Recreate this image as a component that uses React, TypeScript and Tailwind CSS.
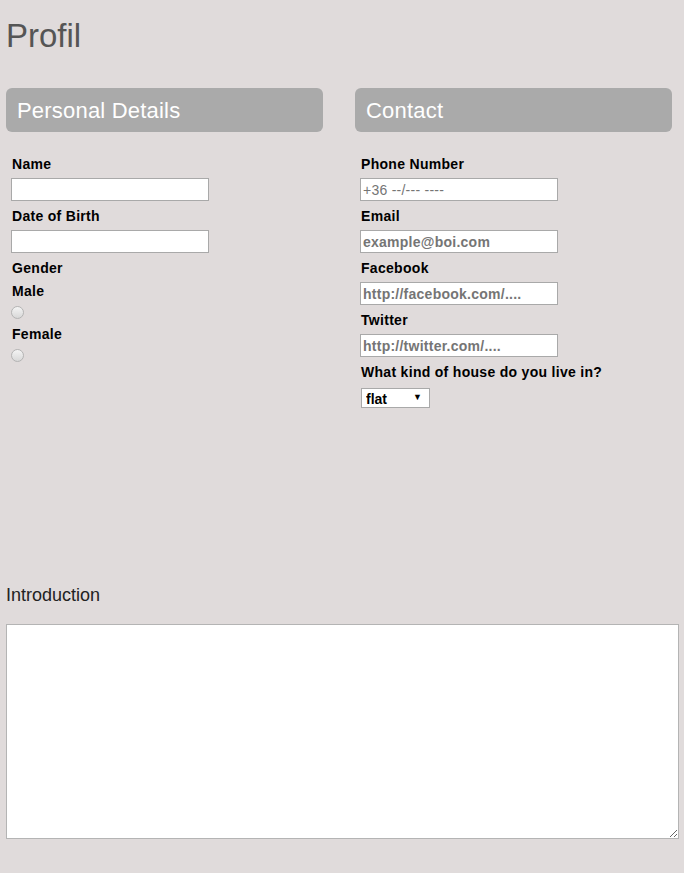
import React from "react";

const Label = ({ children, className = "" }: { children: React.ReactNode; className?: string }) => (
  <label className={"block ml-[1px] text-[14px] leading-[16px] tracking-[0.3px] font-bold text-black " + className}>
    {children}
  </label>
);

const TextInput = ({ placeholder, bold = true }: { placeholder?: string; bold?: boolean }) => (
  <input
    type="text"
    placeholder={placeholder}
    className={
      "block w-[198px] h-[23px] mb-[7px] bg-white border border-[#a9a9a9] px-[2px] text-[14px] tracking-[0.25px] text-black outline-none placeholder:text-[#757575] " +
      (bold ? "font-bold" : "font-normal")
    }
  />
);

const Radio = ({ name }: { name: string }) => (
  <input
    type="radio"
    name={name}
    className="block appearance-none w-[13px] h-[13px] rounded-full border border-[#b4b4b4] bg-gradient-to-b from-[#f4f4f4] to-[#d8d8d8] mb-[7px]"
  />
);

const Header = ({ title }: { title: string }) => (
  <div className="flex items-center h-[44px] rounded-[6px] bg-[#aaaaaa] px-[11px] text-[22px] tracking-[0.2px] text-white mb-[24px]">
    {title}
  </div>
);

export default function App() {
  return (
    <div
      className="min-h-screen bg-[#e0dbdb] px-[6px] pb-[30px]"
      style={{ fontFamily: '"Liberation Sans", Arial, sans-serif' }}
    >
      <h1 className="pt-[16px] text-[33px] leading-[40px] text-[#555555] font-normal">Profil</h1>

      <div className="flex gap-[32px] mt-[32px]">
        <section className="w-[317px]">
          <Header title="Personal Details" />
          <div className="px-[5px]">
            <Label className="mb-[6px]">Name</Label>
            <TextInput />
            <Label className="mb-[6px]">Date of Birth</Label>
            <TextInput />
            <Label className="mb-[7px]">Gender</Label>
            <Label className="mb-[7px]">Male</Label>
            <Radio name="gender" />
            <Label className="mb-[7px]">Female</Label>
            <Radio name="gender" />
          </div>
        </section>

        <section className="w-[317px]">
          <Header title="Contact" />
          <div className="px-[5px]">
            <Label className="mb-[6px]">Phone Number</Label>
            <TextInput placeholder="+36 --/--- ----" bold={false} />
            <Label className="mb-[6px]">Email</Label>
            <TextInput placeholder="example@boi.com" />
            <Label className="mb-[6px]">Facebook</Label>
            <TextInput placeholder="http://facebook.com/...." />
            <Label className="mb-[6px]">Twitter</Label>
            <TextInput placeholder="http://twitter.com/...." />
            <Label className="mb-[7px]">What kind of house do you live in?</Label>
            <div className="relative w-[69px] h-[20px] ml-[1px]">
              <select className="appearance-none w-full h-full bg-white border border-[#a9a9a9] pl-[4px] text-[14px] font-bold text-black outline-none">
                <option>flat</option>
                <option>house</option>
              </select>
              <span className="pointer-events-none absolute right-[8px] top-[4px] text-[9px] leading-[12px] text-black">▼</span>
            </div>
          </div>
        </section>
      </div>

      <div className="mt-[178px] text-[18px] leading-[21px] text-[#222222]">Introduction</div>
      <textarea className="block mt-[18px] w-[673px] h-[215px] bg-white border border-[#b4b4b4] outline-none" />
    </div>
  );
}
